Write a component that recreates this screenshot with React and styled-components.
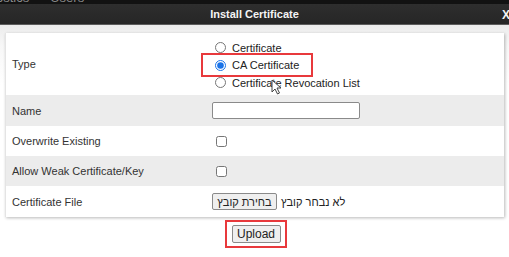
import React from "react";
import styled, { createGlobalStyle } from "styled-components";

const Global = createGlobalStyle`
  html, body { margin: 0; padding: 0; background: #ffffff; }
  body { font-family: "Liberation Sans", Arial, sans-serif; width: 509px; height: 257px; overflow: hidden; }
`;

const Page = styled.div`
  width: 509px;
  height: 257px;
  display: flex;
  flex-direction: column;
  overflow: hidden;
`;

const NavStrip = styled.div`
  height: 4px;
  background: #121212;
  overflow: hidden;
  display: flex;
  gap: 21px;
  color: #8a8a8a;
  font-size: 13px;
  line-height: 13px;
`;

const NavItem = styled.span`
  margin-top: -9px;
  &:first-child { margin-left: -4px; }
`;

const TitleBar = styled.div`
  height: 20px;
  background: linear-gradient(#2e2e2e, #262626);
  border-bottom: 1px solid #5c5c5c;
  display: flex;
  align-items: center;
  justify-content: center;
  position: relative;
  color: #f4f4f4;
  font-weight: bold;
  font-size: 11px;
`;

const Close = styled.span`
  position: absolute;
  right: -1px;
  top: 4px;
  font-size: 12px;
  font-weight: bold;
  color: #f4f4f4;
`;

const Body = styled.div`
  flex: 1;
  background: linear-gradient(#ececec 0px, #f7f7f7 20px, #ffffff 60px);
  padding: 8px 5px 0 5px;
  display: flex;
  flex-direction: column;
  align-items: stretch;
`;

const Panel = styled.div`
  background: #fff;
  box-shadow: 1px 1px 3px rgba(0, 0, 0, 0.28);
  border-left: 1px solid #e4e4e4;
  display: flex;
  flex-direction: column;
`;

const Row = styled.div`
  display: grid;
  grid-template-columns: 206px 1fr;
  align-items: center;
  height: ${(p) => p.$h}px;
  background: ${(p) => (p.$alt ? "#ececec" : "#ffffff")};
`;

const Label = styled.div`
  padding-left: 6px;
  font-size: 11px;
  color: #333;
`;

const Value = styled.div`
  display: flex;
  align-items: center;
  position: relative;
`;

const RadioGroup = styled.div`
  display: flex;
  flex-direction: column;
  padding-top: 2px;
  position: relative;
`;

const RadioLine = styled.label`
  display: flex;
  align-items: center;
  height: 17.5px;
  font-size: 11px;
  color: #222;
  align-self: flex-start;
  ${(p) =>
    p.$marked &&
    `outline: 2px solid #e8393c; outline-offset: 1px; padding-right: 11px; margin-left: -8px; padding-left: 8px;`}
`;

const Radio = styled.input.attrs({ type: "radio" })`
  width: 11px;
  height: 11px;
  margin: 0 6px 0 3px;
  accent-color: #1a73e8;
`;

const TextInput = styled.input`
  width: 146px;
  height: 15px;
  border: 1px solid #8a8a8a;
  border-radius: 2px;
  padding: 0;
  margin: 0;
  background: #fff;
`;

const Check = styled.input.attrs({ type: "checkbox" })`
  width: 11px;
  height: 11px;
  margin: 0 0 0 4px;
`;

const FileButton = styled.button`
  height: 17px;
  width: 65px;
  padding: 0;
  margin: 0;
  border: 1px solid #8a8a8a;
  border-radius: 2px;
  background: #efefef;
  font-family: "Liberation Sans", "DejaVu Sans", sans-serif;
  font-size: 11px;
  color: #222;
  direction: rtl;
`;

const FileText = styled.span`
  margin-left: 4px;
  font-family: "Liberation Sans", "DejaVu Sans", sans-serif;
  font-size: 11px;
  color: #222;
  direction: rtl;
`;

const Actions = styled.div`
  display: flex;
  justify-content: center;
  padding-top: 3px;
`;

const Highlight = styled.div`
  border: 2px solid #e8393c;
  padding: 3px 4px 3px 5px;
  display: flex;
  margin-left: 2px;
`;

const UploadButton = styled.button`
  height: 18px;
  width: 49px;
  padding: 0;
  border: 1px solid #8a8a8a;
  border-radius: 2px;
  background: #efefef;
  font-family: "Liberation Sans", Arial, sans-serif;
  font-size: 12px;
  color: #222;
`;

const Cursor = styled.svg`
  position: absolute;
  left: 59px;
  top: 42px;
`;

export default function App() {
  return (
    <Page>
      <Global />
      <NavStrip>
        <NavItem>ostics</NavItem>
        <NavItem>Users</NavItem>
      </NavStrip>
      <TitleBar>
        Install Certificate
        <Close>X</Close>
      </TitleBar>
      <Body>
        <Panel>
          <Row $h={62}>
            <Label>Type</Label>
            <Value>
              <RadioGroup>
                <RadioLine>
                  <Radio name="t" />
                  Certificate
                </RadioLine>
                <RadioLine $marked>
                  <Radio name="t" defaultChecked />
                  CA Certificate
                </RadioLine>
                <RadioLine>
                  <Radio name="t" />
                  Certificate Revocation List
                </RadioLine>
                <Cursor width="12" height="16" viewBox="0 0 12 16">
                  <path d="M1 1 L1 13 L4 10 L6.5 15 L8.5 14 L6 9 L10 9 Z" fill="#fff" stroke="#444" strokeWidth="1" strokeLinejoin="round" />
                </Cursor>
              </RadioGroup>
            </Value>
          </Row>
          <Row $h={31} $alt>
            <Label>Name</Label>
            <Value>
              <TextInput />
            </Value>
          </Row>
          <Row $h={30}>
            <Label>Overwrite Existing</Label>
            <Value>
              <Check />
            </Value>
          </Row>
          <Row $h={30} $alt>
            <Label>Allow Weak Certificate/Key</Label>
            <Value>
              <Check />
            </Value>
          </Row>
          <Row $h={31}>
            <Label>Certificate File</Label>
            <Value>
              <FileButton>בחירת קובץ</FileButton>
              <FileText>לא נבחר קובץ</FileText>
            </Value>
          </Row>
        </Panel>
        <Actions>
          <Highlight>
            <UploadButton>Upload</UploadButton>
          </Highlight>
        </Actions>
      </Body>
    </Page>
  );
}
